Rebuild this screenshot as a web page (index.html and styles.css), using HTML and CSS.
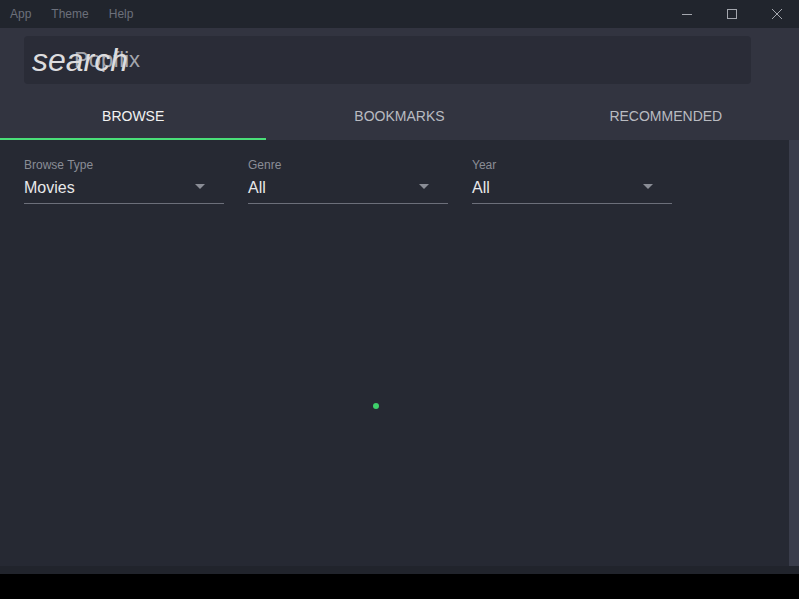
FILE: index.html
```html
<!DOCTYPE html>
<html>
<head>
<meta charset="utf-8">
<link rel="stylesheet" href="styles.css">
</head>
<body>
<div class="app">
  <div class="titlebar">
    <nav class="menu">
      <span class="menu-item">App</span>
      <span class="menu-item">Theme</span>
      <span class="menu-item">Help</span>
    </nav>
    <div class="controls">
      <span class="ctl"><svg width="12" height="12" viewBox="0 0 12 12"><path d="M1 6.5h10" stroke="#a4a7ae" stroke-width="1"/></svg></span>
      <span class="ctl"><svg width="12" height="12" viewBox="0 0 12 12"><rect x="1.5" y="1.5" width="9" height="9" fill="none" stroke="#a4a7ae" stroke-width="1"/></svg></span>
      <span class="ctl"><svg width="12" height="12" viewBox="0 0 12 12"><path d="M1 1L11 11M11 1L1 11" stroke="#a4a7ae" stroke-width="1"/></svg></span>
    </div>
  </div>
  <header class="header">
    <div class="search-wrap">
      <div class="search">
        <span class="search-icon">search</span>
        <input class="search-input" type="text" placeholder="Popflix">
      </div>
    </div>
    <div class="tabs">
      <div class="tab active">BROWSE</div>
      <div class="tab">BOOKMARKS</div>
      <div class="tab">RECOMMENDED</div>
    </div>
  </header>
  <main class="content">
    <div class="body">
      <div class="filters">
        <div class="field">
          <div class="label">Browse Type</div>
          <div class="select"><span>Movies</span><span class="caret"></span></div>
        </div>
        <div class="field">
          <div class="label">Genre</div>
          <div class="select"><span>All</span><span class="caret"></span></div>
        </div>
        <div class="field">
          <div class="label">Year</div>
          <div class="select"><span>All</span><span class="caret"></span></div>
        </div>
      </div>
      <div class="loader"><span class="dot"></span></div>
    </div>
    <div class="scrollbar"></div>
  </main>
  <div class="statusbar"></div>
  <div class="bottom"></div>
</div>
</body>
</html>
```
FILE: styles.css
```css
* { box-sizing: border-box; }
html, body { margin: 0; padding: 0; height: 100%; background: #000; }
body { font-family: "Liberation Sans", Arial, sans-serif; }
.app { display: flex; flex-direction: column; height: 599px; width: 799px; overflow: hidden; }
.titlebar { height: 28px; background: #21252d; display: flex; align-items: center; justify-content: space-between; flex-shrink: 0; }
.menu { display: flex; padding-left: 10px; }
.menu-item { font-size: 12px; color: #6c707b; margin-right: 20px; line-height: 28px; }
.controls { display: flex; height: 28px; }
.ctl { width: 45px; height: 28px; display: flex; align-items: center; justify-content: center; }
.header { background: #323440; flex-shrink: 0; }
.search-wrap { padding: 8px 48px 8px 24px; }
.search { position: relative; height: 48px; background: #2a2c37; border-radius: 4px; display: flex; align-items: center; }
.search-icon { position: absolute; left: 8px; top: 5px; font-size: 32px; font-style: italic; color: #dcdcde; line-height: 38px; pointer-events: none; z-index: 1; }
.search-input { background: transparent; border: none; outline: none; margin-left: 50px; font-family: "Liberation Sans", Arial, sans-serif; font-size: 22px; color: #ddd; width: 600px; padding: 0; height: 48px; }
.search-input::placeholder { color: #a4a6ad; }
.tabs { display: flex; height: 48px; }
.tab { flex: 1; display: flex; align-items: center; justify-content: center; font-size: 14px; color: #b9bbc1; border-bottom: 2px solid transparent; padding-top: 2px; }
.tab.active { color: #f2f2f2; border-bottom-color: #4ade78; }
.content { flex: 1; display: flex; background: #262933; min-height: 0; }
.body { flex: 1; position: relative; padding: 18px 24px; }
.filters { display: flex; gap: 24px; }
.field { width: 200px; }
.label { font-size: 12px; color: #8a8d96; line-height: 14px; }
.select { display: flex; align-items: center; justify-content: space-between; height: 32px; border-bottom: 1px solid #6c6f7a; font-size: 16px; color: #e8e8ea; padding-right: 19px; }
.caret { width: 0; height: 0; border-left: 5px solid transparent; border-right: 5px solid transparent; border-top: 5px solid #8a8d96; margin-bottom: 3px; }
.loader { position: absolute; left: 373px; top: 263px; }
.dot { display: block; width: 6px; height: 6px; border-radius: 50%; background: #3ecf6a; }
.scrollbar { width: 10px; background: #3a3d4b; }
.statusbar { height: 8px; background: #21242c; flex-shrink: 0; }
.bottom { height: 25px; background: #000; flex-shrink: 0; }
```
